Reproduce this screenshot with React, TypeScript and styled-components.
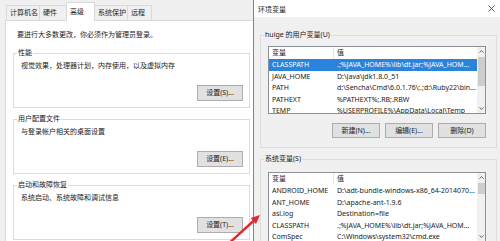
import React from 'react'
import styled, { createGlobalStyle } from 'styled-components'

const GlobalStyle = createGlobalStyle`
    html, body {
        margin: 0;
        padding: 0;
    }

    body {
        width: 500px;
        height: 241px;
        overflow: hidden;
        background: #f0f0f0;
        font-family: "Noto Sans", "Noto Sans CJK SC", sans-serif;
        font-size: 7px;
        color: #222;
    }
`

const Screen = styled.div`
    position: relative;
    display: flex;
    width: 500px;
    height: 241px;
    overflow: hidden;
`

/* ---------- left: system properties ---------- */

const SystemPane = styled.div`
    width: 253px;
    flex: none;
    display: flex;
    flex-direction: column;
    overflow: hidden;
    background: #f0f0f0;
`

const TabStrip = styled.div`
    display: flex;
    align-items: flex-end;
    height: 20px;
    padding-left: 7px;
    flex: none;
`

const Tab = styled.div<{ $w: number; $active?: boolean }>`
    position: relative;
    z-index: ${p => (p.$active ? 1 : 0)};
    box-sizing: border-box;
    width: ${p => p.$w}px;
    height: ${p => (p.$active ? 19 : 15)}px;
    margin-left: -1px;
    margin-bottom: ${p => (p.$active ? -1 : 0)}px;
    padding: ${p => (p.$active ? 2 : 0)}px 0 0 3px;
    border: 1px solid #d9d9d9;
    border-bottom: none;
    background: ${p => (p.$active ? '#fff' : '#f0f0f0')};
    line-height: 14px;
    white-space: nowrap;
`

const TabPanel = styled.div`
    flex: 1;
    margin-left: 5px;
    padding: 9px 0 0 7px;
    background: #fff;
    border: 1px solid #d9d9d9;
    border-right: none;
    border-bottom: none;
`

const Notice = styled.div`
    margin: 0 0 8px 4px;
    line-height: 10px;
`

const Group = styled.fieldset`
    box-sizing: border-box;
    width: 237px;
    min-width: 0;
    margin: 0 0 6px;
    padding: 3px 6px 6px 6px;
    border: 1px solid #dcdcdc;
`

const Legend = styled.legend`
    margin-left: -3px;
    padding: 0 1px;
    line-height: 10px;
`

const GroupText = styled.div`
    line-height: 10px;
    padding-left: 1px;
`

const ButtonRow = styled.div<{ $mt: number }>`
    display: flex;
    justify-content: flex-end;
    gap: 5px;
    margin-top: ${p => p.$mt}px;
`

const Button = styled.button<{ $w: number; $h: number }>`
    box-sizing: border-box;
    width: ${p => p.$w}px;
    height: ${p => p.$h}px;
    padding: 0;
    border: 1px solid #adadad;
    background: #e1e1e1;
    font: inherit;
    color: #222;
    line-height: ${p => p.$h - 2}px;
    text-align: center;
    white-space: nowrap;
`

/* ---------- right: environment variables ---------- */

const EnvDialog = styled.div`
    flex: 1;
    display: flex;
    flex-direction: column;
    border-left: 1px solid #4b8fd6;
    background: #f0f0f0;
`

const TitleBar = styled.div`
    height: 17px;
    flex: none;
    display: flex;
    align-items: center;
    justify-content: space-between;
    padding: 0 5px 0 4px;
    background: #fff;
`

const DialogBody = styled.div`
    padding: 13px 3px 0 6px;
`

const EnvGroup = styled.fieldset<{ $pt: number }>`
    min-width: 0;
    margin: 0 0 6px;
    padding: ${p => p.$pt}px 10px 9px 7px;
    border: 1px solid #dcdcdc;
`

const EnvLegend = styled.legend`
    margin-left: -4px;
    padding: 0 1px;
    line-height: 10px;
`

const ListView = styled.div<{ $h: number }>`
    box-sizing: border-box;
    height: ${p => p.$h}px;
    display: flex;
    overflow: hidden;
    border: 1px solid #8a8f98;
    background: #fff;
`

const ListBody = styled.div`
    flex: 1;
    min-width: 0;
`

const HeaderRow = styled.div`
    display: grid;
    grid-template-columns: 65px 1fr;
    height: 12px;
    line-height: 12px;
`

const HeaderCell = styled.div<{ $divider?: boolean }>`
    padding-left: 3px;
    border-right: ${p => (p.$divider ? '1px solid #e5e5e5' : 'none')};
`

const Row = styled.div<{ $selected?: boolean }>`
    display: grid;
    grid-template-columns: 65px 1fr;
    height: 11.6px;
    line-height: 11.6px;
    background: ${p => (p.$selected ? '#2a84dc' : 'transparent')};
    color: ${p => (p.$selected ? '#fff' : '#222')};
`

const Cell = styled.div`
    padding-left: 3px;
    overflow: hidden;
    white-space: nowrap;
`

const ScrollBar = styled.div`
    width: 8px;
    flex: none;
    display: flex;
    flex-direction: column;
    background: #f0f0f0;
`

const ScrollArrow = styled.div`
    height: 9px;
    flex: none;
    display: flex;
    align-items: center;
    justify-content: center;
`

const ScrollTrack = styled.div`
    flex: 1;
`

const Thumb = styled.div<{ $top: number; $h: number }>`
    margin: ${p => p.$top}px 0 0 1px;
    width: 7px;
    height: ${p => p.$h}px;
    background: #cdcdcd;
`

const Overlay = styled.svg`
    position: absolute;
    left: 0;
    top: 0;
    pointer-events: none;
`

type Item = { name: string; value: string; selected?: boolean }

const userVars: Item[] = [
    { name: 'CLASSPATH', value: '.;%JAVA_HOME%\\lib\\dt.jar;%JAVA_HOM...', selected: true },
    { name: 'JAVA_HOME', value: 'D:\\Java\\jdk1.8.0_51' },
    { name: 'PATH', value: 'd:\\Sencha\\Cmd\\6.0.1.76\\;.;d:\\Ruby22\\bin...' },
    { name: 'PATHEXT', value: '%PATHEXT%;.RB;.RBW' },
    { name: 'TEMP', value: '%USERPROFILE%\\AppData\\Local\\Temp' },
]

const systemVars: Item[] = [
    { name: 'ANDROID_HOME', value: 'D:\\adt-bundle-windows-x86_64-2014070...' },
    { name: 'ANT_HOME', value: 'D:\\apache-ant-1.9.6' },
    { name: 'asl.log', value: 'Destination=file' },
    { name: 'CLASSPATH', value: '.;%JAVA_HOME%\\lib\\dt.jar;%JAVA_HOM...' },
    { name: 'ComSpec', value: 'C:\\Windows\\system32\\cmd.exe' },
]

const Chevron = ({ up }: { up?: boolean }) => (
    <svg width="5" height="3" viewBox="0 0 5 3">
        <polyline
            points={up ? '0.5,2.6 2.5,0.6 4.5,2.6' : '0.5,0.4 2.5,2.4 4.5,0.4'}
            fill="none"
            stroke="#555"
            strokeWidth="0.9"
        />
    </svg>
)

const VarList = ({ items, height, thumbTop, thumbHeight }: { items: Item[]; height: number; thumbTop: number; thumbHeight: number }) => (
    <ListView $h={height}>
        <ListBody>
            <HeaderRow>
                <HeaderCell $divider>变量</HeaderCell>
                <HeaderCell>值</HeaderCell>
            </HeaderRow>
            {items.map(item => (
                <Row key={item.name + item.value} $selected={item.selected}>
                    <Cell>{item.name}</Cell>
                    <Cell>{item.value}</Cell>
                </Row>
            ))}
        </ListBody>
        <ScrollBar>
            <ScrollArrow><Chevron up /></ScrollArrow>
            <ScrollTrack>
                <Thumb $top={thumbTop} $h={thumbHeight} />
            </ScrollTrack>
            <ScrollArrow><Chevron /></ScrollArrow>
        </ScrollBar>
    </ListView>
)

const groups = [
    { title: '性能', text: '视觉效果，处理器计划，内存使用，以及虚拟内存', button: '设置(S)...' },
    { title: '用户配置文件', text: '与登录帐户相关的桌面设置', button: '设置(E)...' },
    { title: '启动和故障恢复', text: '系统启动、系统故障和调试信息', button: '设置(T)...' },
]

const tabs = [
    { label: '计算机名', w: 34 },
    { label: '硬件', w: 28 },
    { label: '高级', w: 29, active: true },
    { label: '系统保护', w: 34 },
    { label: '远程', w: 25 },
]

export default function App() {
    return (
        <Screen>
            <GlobalStyle />

            <SystemPane>
                <TabStrip>
                    {tabs.map(t => (
                        <Tab key={t.label} $w={t.w} $active={t.active}>{t.label}</Tab>
                    ))}
                </TabStrip>
                <TabPanel>
                    <Notice>要进行大多数更改，你必须作为管理员登录。</Notice>
                    {groups.map(g => (
                        <Group key={g.title}>
                            <Legend>{g.title}</Legend>
                            <GroupText>{g.text}</GroupText>
                            <ButtonRow $mt={14}>
                                <Button $w={46} $h={16}>{g.button}</Button>
                            </ButtonRow>
                        </Group>
                    ))}
                </TabPanel>
            </SystemPane>

            <EnvDialog>
                <TitleBar>
                    <span>环境变量</span>
                    <svg width="7" height="7" viewBox="0 0 7 7">
                        <path d="M0.5 0.5 L6.5 6.5 M6.5 0.5 L0.5 6.5" stroke="#333" strokeWidth="0.8" />
                    </svg>
                </TitleBar>
                <DialogBody>
                    <EnvGroup $pt={6}>
                        <EnvLegend>huige 的用户变量(U)</EnvLegend>
                        <VarList items={userVars} height={68} thumbTop={1} thumbHeight={29} />
                        <ButtonRow $mt={9}>
                            <Button $w={48} $h={15}>新建(N)...</Button>
                            <Button $w={48} $h={15}>编辑(E)...</Button>
                            <Button $w={48} $h={15}>删除(D)</Button>
                        </ButtonRow>
                    </EnvGroup>
                    <EnvGroup $pt={8}>
                        <EnvLegend>系统变量(S)</EnvLegend>
                        <VarList items={systemVars} height={70} thumbTop={1} thumbHeight={11} />
                    </EnvGroup>
                </DialogBody>
            </EnvDialog>

            <Overlay width="500" height="241" viewBox="0 0 500 241">
                <line x1="226" y1="246" x2="254" y2="220.5" stroke="#e3292b" strokeWidth="2.4" />
                <polygon points="260,215 256,224 250.6,218.1" fill="#e3292b" />
            </Overlay>
        </Screen>
    )
}
